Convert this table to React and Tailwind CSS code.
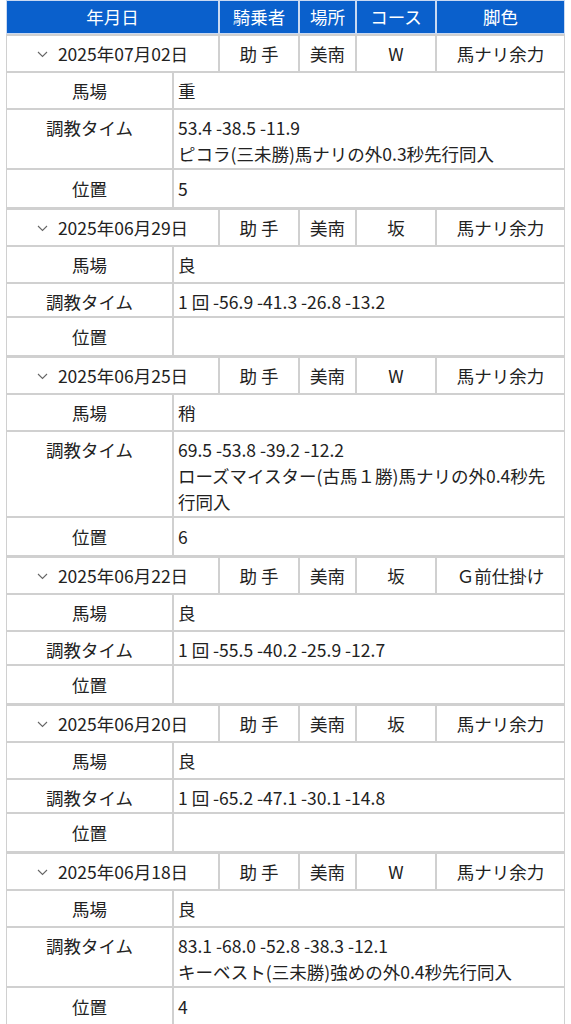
import React from 'react'

const entries = [
  { date: '2025年07月02日', rider: '助 手', place: '美南', course: 'W', leg: '馬ナリ余力', baba: '重', time: ['53.4 -38.5 -11.9', 'ピコラ(三未勝)馬ナリの外0.3秒先行同入'], pos: '5' },
  { date: '2025年06月29日', rider: '助 手', place: '美南', course: '坂', leg: '馬ナリ余力', baba: '良', time: ['1 回 -56.9 -41.3 -26.8 -13.2'], pos: '' },
  { date: '2025年06月25日', rider: '助 手', place: '美南', course: 'W', leg: '馬ナリ余力', baba: '稍', time: ['69.5 -53.8 -39.2 -12.2', 'ローズマイスター(古馬１勝)馬ナリの外0.4秒先行同入'], pos: '6' },
  { date: '2025年06月22日', rider: '助 手', place: '美南', course: '坂', leg: 'Ｇ前仕掛け', baba: '良', time: ['1 回 -55.5 -40.2 -25.9 -12.7'], pos: '' },
  { date: '2025年06月20日', rider: '助 手', place: '美南', course: '坂', leg: '馬ナリ余力', baba: '良', time: ['1 回 -65.2 -47.1 -30.1 -14.8'], pos: '' },
  { date: '2025年06月18日', rider: '助 手', place: '美南', course: 'W', leg: '馬ナリ余力', baba: '良', time: ['83.1 -68.0 -52.8 -38.3 -12.1', 'キーベスト(三未勝)強めの外0.4秒先行同入'], pos: '4' },
]

const Chevron = () => (
  <svg width="11" height="7" viewBox="0 0 11 7" className="mr-[10px] mt-[2px]">
    <path d="M1 1 L5.5 5.5 L10 1" fill="none" stroke="#666" strokeWidth="1.1" />
  </svg>
)

function Block({ e }) {
  const top = 'border border-t-2 border-[#d0d0d0] h-[38px] flex items-center justify-center'
  const lab = 'border border-[#d0d0d0] text-center px-1'
  const val = 'border border-[#d0d0d0] pl-[4px] pr-[8px]'
  return (
    <div>
      <div className="grid grid-cols-[213px_80px_57px_80px_1fr]">
        <div className={top}><Chevron />{e.date}</div>
        <div className={top}>{e.rider}</div>
        <div className={top}>{e.place}</div>
        <div className={top}>{e.course}</div>
        <div className={top}>{e.leg}</div>
      </div>
      <div className="grid grid-cols-[167px_1fr]">
        <div className={lab + ' h-[37px] py-[5px]'}>馬場</div>
        <div className={val + ' h-[37px] py-[5px]'}>{e.baba}</div>
        <div className={lab + ' pt-[5px] pb-[1px]'}>調教タイム</div>
        <div className={val + ' pt-[5px] pb-[1px]'}>
          {e.time.map((t, i) => <div key={i}>{t}</div>)}
        </div>
        <div className={lab + ' h-[39px] flex items-center justify-center'}>位置</div>
        <div className={val + ' h-[39px] flex items-center'}>{e.pos}</div>
      </div>
    </div>
  )
}

export default function App() {
  const head = 'bg-[#0a60cc] text-white h-[34px] flex items-center justify-center border border-[#c9d9f2]'
  return (
    <div className="bg-white px-[6px] text-[17.5px] leading-[26px] text-[#222] font-['Noto_Sans_CJK_JP','Noto_Sans',sans-serif]">
      <div className="grid grid-cols-[213px_80px_57px_80px_1fr]">
        <div className={head}>年月日</div>
        <div className={head}>騎乗者</div>
        <div className={head}>場所</div>
        <div className={head}>コース</div>
        <div className={head}>脚色</div>
      </div>
      {entries.map((e, i) => <Block key={i} e={e} />)}
    </div>
  )
}
